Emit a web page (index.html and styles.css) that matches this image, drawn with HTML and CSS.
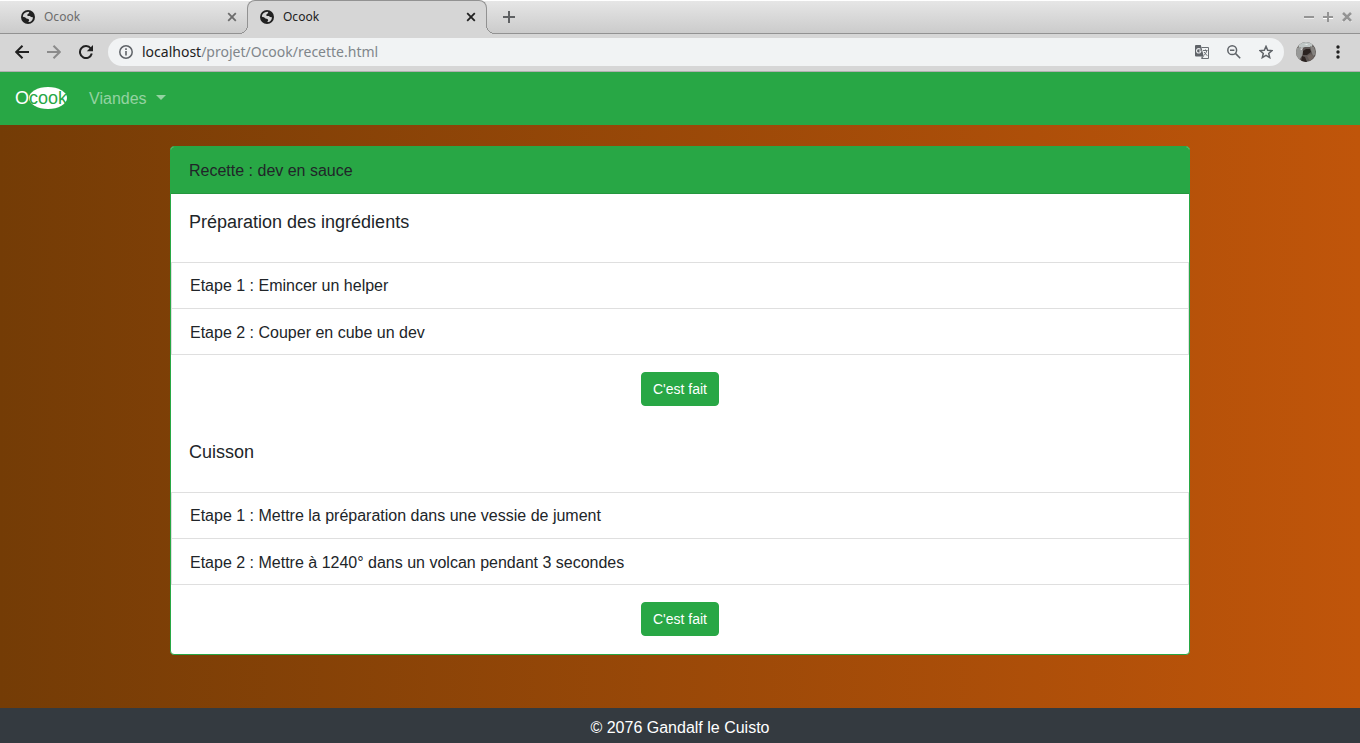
FILE: index.html
```html
<!DOCTYPE html>
<html lang="fr">
<head>
<meta charset="utf-8">
<meta name="viewport" content="width=device-width, initial-scale=1">
<title>Ocook</title>
<link rel="stylesheet" href="styles.css">
</head>
<body>
<svg class="symbols" aria-hidden="true">
  <symbol id="globe" viewBox="0 0 14 14">
    <circle cx="7" cy="7" r="7" fill="#212121"/>
    <path d="M7.300 1.700C8.300 2 8.500 2.700 7.800 3.300L6.400 4.400 6.200 5.600 7.200 6.100 8.900 6 10 7.100 11.900 7.200C12 9.600 10.600 11.400 8.500 12L7.300 12.100 8.200 10.300 7.500 9 5.500 8.600 4 7.200 1.900 6.700C1.900 4 4.200 1.800 7.300 1.700Z" fill="#d6d6d6"/>
  </symbol>
  <symbol id="cross" viewBox="0 0 10 10">
    <path d="M1.200 1.200 8.800 8.800M8.800 1.200 1.200 8.800" fill="none" stroke="currentColor" stroke-width="1.800"/>
  </symbol>
</svg>
<header class="browser">
  <div class="tabstrip">
    <div class="tab">
      <svg class="favicon"><use href="#globe"/></svg>
      <span class="tab-title">Ocook</span>
      <button class="icon-button" aria-label="Fermer l'onglet"><svg class="close"><use href="#cross"/></svg></button>
    </div>
    <div class="tab tab-active">
      <svg class="favicon"><use href="#globe"/></svg>
      <span class="tab-title">Ocook</span>
      <button class="icon-button" aria-label="Fermer l'onglet"><svg class="close"><use href="#cross"/></svg></button>
    </div>
    <button class="icon-button new-tab" aria-label="Nouvel onglet"><svg width="12" height="12" viewBox="0 0 12 12"><path d="M6 0V12M0 6H12" stroke="#5f6163" stroke-width="2"/></svg></button>
    <div class="window-controls">
      <button class="icon-button" aria-label="Réduire"><svg width="10" height="10" viewBox="0 0 10 10"><path d="M0 6H10" stroke="#fff"/><path d="M0 5H10" stroke="#949494" stroke-width="2"/></svg></button>
      <button class="icon-button" aria-label="Agrandir"><svg width="10" height="10" viewBox="0 0 10 10"><path d="M0 6.500H10" stroke="#fff"/><path d="M5 0V10M0 5H10" stroke="#949494" stroke-width="2"/></svg></button>
      <button class="icon-button" aria-label="Fermer"><svg width="10" height="10" viewBox="0 0 10 10"><path d="M1 2 9 10M9 2 1 10" stroke="#fff" stroke-width="2"/><path d="M1 1 9 9M9 1 1 9" stroke="#949494" stroke-width="2.600"/></svg></button>
    </div>
  </div>
  <div class="toolbar">
    <button class="icon-button" aria-label="Retour"><svg width="14" height="14" viewBox="0 0 14 14"><path d="M14 7H1.500M7.500 .7 1.200 7 7.500 13.300" fill="none" stroke="#212121" stroke-width="2"/></svg></button>
    <button class="icon-button" aria-label="Avancer"><svg width="14" height="14" viewBox="0 0 14 14"><path d="M0 7H12.500M6.500 .7 12.800 7 6.500 13.300" fill="none" stroke="#8b8b8b" stroke-width="2"/></svg></button>
    <button class="icon-button" aria-label="Actualiser"><svg width="14" height="14" viewBox="0 0 14 14"><path d="M11.800 3.500A6 6 0 1 0 12.800 8.600" fill="none" stroke="#212121" stroke-width="2"/><path d="M14 0V6.200H7.800Z" fill="#212121"/></svg></button>
    <div class="address">
      <svg width="14" height="14" viewBox="0 0 14 14"><circle cx="7" cy="7" r="6.200" fill="none" stroke="#5f6368" stroke-width="1.500"/><path d="M7 6V10.500M7 3.300V4.900" stroke="#5f6368" stroke-width="1.600"/></svg>
      <a class="url" href="#"><span class="host">localhost</span>/projet/Ocook/recette.html</a>
      <button class="icon-button" aria-label="Traduire"><svg width="14" height="14" viewBox="0 0 14 14"><path d="M6.500 2.500H13.500V13.500H6.500" fill="#f1f3f4" stroke="#6b6f74"/><path d="M8 5.500H12.500M10.500 4.500V5.500M11.800 5.500C11.300 7.800 10 9.500 8.800 10.500M9 7 12.300 10.800" fill="none" stroke="#6b6f74"/><path d="M1 0H5.800L8.800 11.500H1Q0 11.500 0 10.500V1Q0 0 1 0Z" fill="#5f6368"/><path d="M8.800 11.500 6.500 14V11.500Z" fill="#5f6368"/><path d="M5.500 4.500A2.200 2.200 0 1 0 5.900 6H4" fill="none" stroke="#e8eaed" stroke-width="1.200"/></svg></button>
      <button class="icon-button" aria-label="Zoom"><svg width="14" height="14" viewBox="0 0 14 14"><circle cx="5.200" cy="5.200" r="4.400" fill="none" stroke="#5f6368" stroke-width="1.500"/><path d="M8.400 8.400 13.200 13.200M3 5.200H7.400" fill="none" stroke="#5f6368" stroke-width="1.500"/></svg></button>
      <button class="icon-button" aria-label="Ajouter aux favoris"><svg width="14" height="14" viewBox="0 0 14 14"><path d="M7 1.400 8.700 5.200 12.900 5.600 9.700 8.400 10.700 12.600 7 10.400 3.300 12.600 4.300 8.400 1.100 5.600 5.300 5.200Z" fill="none" stroke="#5f6368" stroke-width="1.500"/></svg></button>
    </div>
    <button class="icon-button" aria-label="Profil"><svg width="20" height="20" viewBox="0 0 20 20"><defs><clipPath id="round"><circle cx="10" cy="10" r="10"/></clipPath></defs><g clip-path="url(#round)"><path d="M0 0H20V20H0Z" fill="#5c5654"/><path d="M2 0H17L16 5 9 5 3 7Z" fill="#bfc6c5"/><path d="M0 6 5 5 7 9 6 14 3 18 0 16Z" fill="#989998"/><path d="M7 9 10 7 14 7 15 10 11 13 7 13Z" fill="#2a2220"/><path d="M14 4 18 5 20 12 17 14 15 8Z" fill="#85827f"/><path d="M6 14 9 15 11 20H5Z" fill="#2b2321"/><path d="M11 14 15 12 18 15 14 19Z" fill="#6f6560"/><path d="M4 7 7 6 6 8ZM8 2 12 2 11 3Z" fill="#eef1ef"/></g></svg></button>
    <button class="icon-button menu" aria-label="Menu"><svg width="4" height="14" viewBox="0 0 4 14"><g fill="#212121"><circle cx="2" cy="2" r="1.700"/><circle cx="2" cy="7" r="1.700"/><circle cx="2" cy="12" r="1.700"/></g></svg></button>
  </div>
</header>
<nav class="navbar">
  <a class="brand" href="#">O<span class="brand-oval">cook</span></a>
  <button class="dropdown">Viandes</button>
</nav>
<main class="page">
  <article class="card">
    <h1 class="card-header">Recette : dev en sauce</h1>
    <section class="stage">
      <h2 class="stage-title">Préparation des ingrédients</h2>
      <ul class="steps">
        <li class="step">Etape 1 : Emincer un helper</li>
        <li class="step">Etape 2 : Couper en cube un dev</li>
      </ul>
      <div class="stage-action"><button class="done">C'est fait</button></div>
    </section>
    <section class="stage">
      <h2 class="stage-title">Cuisson</h2>
      <ul class="steps">
        <li class="step">Etape 1 : Mettre la préparation dans une vessie de jument</li>
        <li class="step">Etape 2 : Mettre à 1240° dans un volcan pendant 3 secondes</li>
      </ul>
      <div class="stage-action"><button class="done">C'est fait</button></div>
    </section>
  </article>
</main>
<footer class="footer">© 2076 Gandalf le Cuisto</footer>
</body>
</html>
```
FILE: styles.css
```css
* {
  box-sizing: border-box;
}

body {
  display: flex;
  flex-direction: column;
  min-height: 100vh;
  margin: 0;
  color: #212529;
  font: 16px/24px "Liberation Sans", Arial, sans-serif;
  background: linear-gradient(to right, #743c06, #c0550a);
}

.symbols {
  position: absolute;
  width: 0;
  height: 0;
}

button {
  font-family: inherit;
}

.icon-button {
  display: flex;
  align-items: center;
  justify-content: center;
  flex: none;
  padding: 0;
  border: 0;
  color: inherit;
  background: none;
}

/* Browser chrome */
.browser {
  color: #212121;
  font-family: "Noto Sans", sans-serif;
  background: #d6d6d6;
  border-bottom: 1px solid #b0b0b0;
}

.tabstrip {
  display: flex;
  height: 34px;
  background: linear-gradient(#fff 1px, #e6e6e6 1px, #cbcbcb);
  border-bottom: 1px solid #929292;
}

.tab {
  display: flex;
  align-items: center;
  gap: 9px;
  width: 247px;
  padding: 0 10px 0 21px;
  color: #6c6c6c;
  font-size: 12px;
}

.tab-active {
  position: relative;
  width: 240px;
  height: 34px;
  padding: 0 10px 2px 12px;
  color: #212121;
  background: #d6d6d6;
  border: 1px solid #929292;
  border-bottom: 0;
  border-radius: 8px 8px 0 0;
}

.tab-active::before,
.tab-active::after {
  content: "";
  position: absolute;
  bottom: 0;
  width: 9px;
  height: 9px;
}

.tab-active::before {
  right: 100%;
  background: radial-gradient(circle at 0 0, transparent 8px, #929292 8px, #929292 9px, #d6d6d6 9px);
}

.tab-active::after {
  left: 100%;
  background: radial-gradient(circle at 100% 0, transparent 8px, #929292 8px, #929292 9px, #d6d6d6 9px);
}

.favicon {
  width: 14px;
  height: 14px;
}

.tab-title {
  flex: 1;
}

.close {
  width: 10px;
  height: 10px;
}

.new-tab {
  margin-left: 16px;
}

.window-controls {
  display: flex;
  gap: 9px;
  margin-left: auto;
  padding-right: 8px;
}

.toolbar {
  display: flex;
  align-items: center;
  gap: 18px;
  height: 37px;
  padding: 0 20px 1px 15px;
}

.address {
  display: flex;
  flex: 1;
  align-items: center;
  gap: 18px;
  height: 28px;
  margin-left: -3px;
  padding: 0 11px;
  background: #f1f3f4;
  border-radius: 14px;
}

.url {
  flex: 1;
  margin-left: -9px;
  color: #80868b;
  font-size: 14px;
  text-decoration: none;
}

.host {
  color: #212121;
}

.address + .icon-button {
  margin: 0 2px 0 -6px;
}

/* Site navigation */
.navbar {
  display: flex;
  align-items: center;
  gap: 22px;
  height: 53px;
  padding: 0 15px;
  background: #28a745;
}

.brand {
  padding-bottom: 1px;
  color: #fff;
  font-size: 18px;
  text-decoration: none;
}

.brand-oval {
  display: inline-block;
  color: #28a745;
  line-height: 22px;
  background: #fff;
  border-radius: 50%;
}

.dropdown {
  display: flex;
  align-items: center;
  gap: 9px;
  padding: 0;
  border: 0;
  color: rgba(255, 255, 255, 0.5);
  font-size: 16px;
  line-height: 24px;
  background: none;
}

.dropdown::after {
  content: "";
  margin-bottom: 2px;
  border: 5px solid transparent;
  border-top-color: currentColor;
  border-bottom: 0;
}

/* Recipe */
.page {
  flex: 1;
  padding: 21px 12.5%;
}

.card {
  overflow: hidden;
  background: #fff;
  border: 1px solid #28a745;
  border-radius: 4px;
}

.card-header {
  margin: 0;
  padding: 12px 18px 10px;
  font-size: 16px;
  font-weight: 400;
  background: #28a745;
  border-bottom: 1px solid #24963e;
}

.stage-title {
  margin: 0;
  padding: 16px 18px 28px;
  font-size: 18px;
  font-weight: 400;
}

.steps {
  margin: 0;
  padding: 0;
  list-style: none;
  border: 1px solid #dfdfdf;
}

.step {
  padding: 11px 18px;
  line-height: 23px;
}

.step + .step {
  padding: 12px 18px 10px;
  border-top: 1px solid #dfdfdf;
}

.stage-action {
  display: flex;
  justify-content: center;
  padding: 17px 18px 18px;
}

.done {
  padding: 5px 11px;
  border: 1px solid #28a745;
  border-radius: 4px;
  color: #fff;
  font-size: 14px;
  line-height: 22px;
  background: #28a745;
}

.footer {
  padding: 8px 0 4px;
  color: #fff;
  line-height: 23px;
  text-align: center;
  background: #343a40;
}
```
